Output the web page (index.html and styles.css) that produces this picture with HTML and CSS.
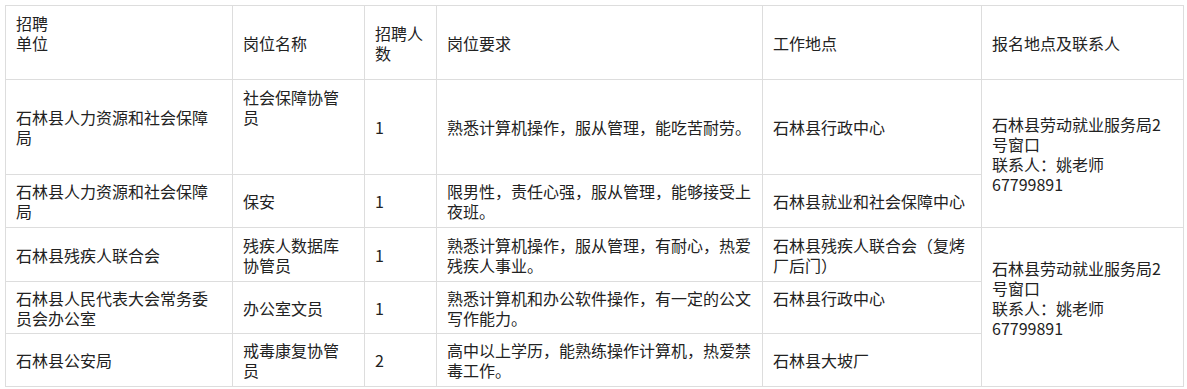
FILE: index.html
```html
<!DOCTYPE html>
<html lang="zh-CN">
<head>
<meta charset="utf-8">
<title>招聘岗位</title>
<link rel="stylesheet" href="styles.css">
</head>
<body>
<table class="jobs">
  <colgroup>
    <col class="c-unit">
    <col class="c-post">
    <col class="c-num">
    <col class="c-req">
    <col class="c-place">
    <col class="c-contact">
  </colgroup>
  <tr class="r-head">
    <td>招聘<br>单位<br>&nbsp;</td>
    <td>岗位名称</td>
    <td>招聘人数</td>
    <td>岗位要求</td>
    <td>工作地点</td>
    <td>报名地点及联系人</td>
  </tr>
  <tr class="r-1">
    <td>石林县人力资源和社会保障局</td>
    <td class="top">社会保障协管员</td>
    <td>1</td>
    <td>熟悉计算机操作，服从管理，能吃苦耐劳。</td>
    <td>石林县行政中心</td>
    <td rowspan="2">石林县劳动就业服务局2号窗口<br>联系人：姚老师<br>67799891</td>
  </tr>
  <tr class="r-2">
    <td>石林县人力资源和社会保障局</td>
    <td>保安</td>
    <td>1</td>
    <td>限男性，责任心强，服从管理，能够接受上夜班。</td>
    <td>石林县就业和社会保障中心</td>
  </tr>
  <tr class="r-3">
    <td>石林县残疾人联合会</td>
    <td>残疾人数据库协管员</td>
    <td>1</td>
    <td>熟悉计算机操作，服从管理，有耐心，热爱残疾人事业。</td>
    <td>石林县残疾人联合会（复烤厂后门）</td>
    <td rowspan="3" class="lifted">石林县劳动就业服务局2号窗口<br>联系人：姚老师<br>67799891</td>
  </tr>
  <tr class="r-4">
    <td>石林县人民代表大会常务委员会办公室</td>
    <td>办公室文员</td>
    <td>1</td>
    <td>熟悉计算机和办公软件操作，有一定的公文写作能力。</td>
    <td>石林县行政中心<br>&nbsp;</td>
  </tr>
  <tr class="r-5">
    <td>石林县公安局</td>
    <td>戒毒康复协管员</td>
    <td>2</td>
    <td>高中以上学历，能熟练操作计算机，热爱禁毒工作。</td>
    <td>石林县大坡厂</td>
  </tr>
</table>
</body>
</html>
```

FILE: styles.css
```css
html, body {
  margin: 0;
  padding: 0;
  background: #ffffff;
}

body {
  padding: 5px;
  font-family: "Noto Sans CJK SC", "Noto Sans", sans-serif;
  font-size: 16px;
  line-height: 20px;
  color: #222222;
}

.jobs {
  border-collapse: collapse;
  table-layout: fixed;
  width: 1178px;
}

.c-unit { width: 227px; }
.c-post { width: 132px; }
.c-num { width: 72px; }
.c-req { width: 326px; }
.c-place { width: 219px; }
.c-contact { width: 202px; }

.jobs td {
  border: 1px solid #dddddd;
  padding: 0 10px;
  vertical-align: middle;
  text-align: left;
  word-break: break-all;
}

.r-head { height: 74px; }
.r-1 { height: 95px; }
.r-2 { height: 53px; }
.r-3 { height: 54px; }
.r-4 { height: 52px; }
.r-5 { height: 53px; }

.jobs td.top {
  vertical-align: top;
  padding-top: 7px;
}

.jobs td.lifted {
  padding-bottom: 18px;
}
```
